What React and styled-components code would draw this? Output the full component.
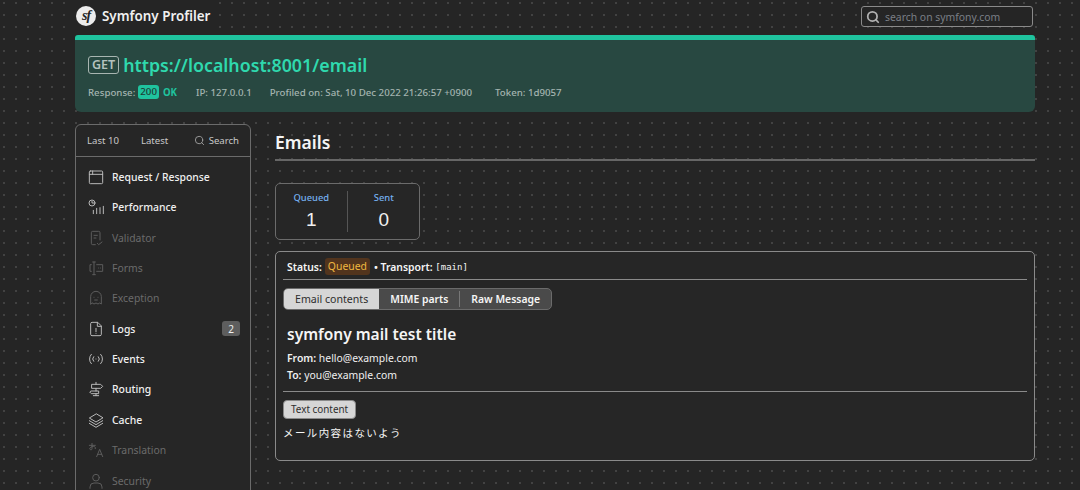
import React from 'react';
import styled, { createGlobalStyle } from 'styled-components';
import { Search as SearchIcon } from 'lucide-react';

const GlobalStyle = createGlobalStyle`
  html, body {
    margin: 0;
    padding: 0;
    height: 490px;
    overflow: hidden;
  }
  body {
    background-color: #252525;
    background-image: radial-gradient(circle at 4px 3px, #424242 1.35px, transparent 1.4px);
    background-size: 12px 12px;
    color: #f5f5f5;
    font-family: "Noto Sans", "Noto Sans CJK JP", sans-serif;
    font-size: 12px;
  }
`;

const Page = styled.div`
  width: 960px;
  height: 490px;
  overflow: hidden;
  margin: 0 0 0 75px;
`;

const Header = styled.header`
  height: 35px;
  display: flex;
  justify-content: space-between;
  align-items: flex-start;
`;

const Brand = styled.div`
  display: flex;
  align-items: center;
  gap: 6px;
  height: 33px;
  background: #252525;
  padding: 0 4px 2px 1px;
  box-sizing: border-box;
`;

const BrandLogo = styled.span`
  width: 20px;
  height: 20px;
  border-radius: 50%;
  background: #ececec;
  color: #252525;
  display: flex;
  align-items: center;
  justify-content: center;
  font: italic 700 14px "Liberation Serif", serif;
  letter-spacing: -1px;
`;

const BrandName = styled.span`
  font-size: 13.4px;
  font-weight: 600;
  color: #f0f0f0;
`;

const SearchBox = styled.div`
  width: 172px;
  height: 21px;
  margin: 6px 2px 0 0;
  box-sizing: border-box;
  border: 1px solid #8a8a8a;
  border-radius: 3px;
  display: flex;
  align-items: center;
  gap: 5px;
  padding-left: 4px;
  background: #252525;
  color: #7a7f85;
  font-size: 10.4px;
  svg {
    color: #b0b0b0;
  }
`;

const Summary = styled.section`
  height: 77px;
  box-sizing: border-box;
  border-top: 5px solid #1fc39e;
  border-radius: 3px 3px 6px 6px;
  background: #284841;
  padding: 12px 13px 0;
`;

const UrlRow = styled.div`
  display: flex;
  align-items: center;
  gap: 4px;
  height: 26px;
`;

const Method = styled.span`
  border: 1px solid #a8b5b1;
  border-radius: 3px;
  color: #b5c2be;
  font-size: 12.5px;
  font-weight: 600;
  line-height: 16px;
  padding: 0 3px;
`;

const Url = styled.span`
  color: #2fd9ae;
  font-size: 17.8px;
  font-weight: 600;
`;

const MetaRow = styled.div`
  display: flex;
  align-items: center;
  margin-top: 6px;
  height: 16px;
  color: #a4b4b0;
  font-size: 9.7px;
  font-weight: 500;
`;

const MetaItem = styled.span`
  margin-right: ${({ $gap }) => $gap}px;
  display: flex;
  align-items: center;
  white-space: pre;
`;

const StatusCode = styled.span`
  background: #1fc39e;
  color: #1e3a33;
  border-radius: 3px;
  padding: 0 2px;
  margin: 0 4px 0 3px;
  line-height: 14px;
`;

const StatusText = styled.span`
  color: #1fc39e;
  font-weight: 700;
`;

const Body = styled.div`
  display: flex;
  align-items: flex-start;
  gap: 24px;
  margin-top: 12px;
`;

const Sidebar = styled.aside`
  width: 176px;
  flex: none;
  height: 400px;
  box-sizing: border-box;
  border: 1px solid #6b6b6b;
  border-radius: 6px;
  background: #262626;
`;

const SideTabs = styled.div`
  height: 32px;
  box-sizing: border-box;
  border-bottom: 1px solid #6b6b6b;
  display: flex;
  align-items: center;
  gap: 22px;
  padding: 0 11px;
  color: #c8c8c8;
  font-size: 9.6px;
  svg {
    color: #a0a0a0;
    margin-right: 4px;
  }
`;

const SideTab = styled.span`
  display: flex;
  align-items: center;
  &:last-child {
    margin-left: auto;
  }
`;

const Menu = styled.nav`
  padding-top: 4.6px;
`;

const MenuItem = styled.div`
  height: 30.38px;
  display: flex;
  align-items: center;
  padding: 0 10px 0 12px;
  font-size: 10.4px;
  color: ${({ $muted }) => ($muted ? '#6b6b6b' : '#f0f0f0')};
  svg {
    flex: none;
    width: 16px;
    height: 16px;
    margin-right: 8px;
    color: ${({ $muted }) => ($muted ? '#5c5c5c' : '#b8b8b8')};
  }
`;

const MenuLabel = styled.span`
  flex: 1;
  font-weight: ${({ $muted }) => ($muted ? 400 : 500)};
`;

const Count = styled.span`
  background: #5e5e5e;
  color: #f0f0f0;
  border-radius: 3px;
  width: 18px;
  height: 15px;
  display: flex;
  align-items: center;
  justify-content: center;
  font-size: 10px;
`;

const Content = styled.main`
  flex: 1;
  min-width: 0;
`;

const Title = styled.h2`
  margin: 0;
  height: 37px;
  box-sizing: border-box;
  border-bottom: 2px solid #666;
  font-size: 17.5px;
  font-weight: 600;
  line-height: 36px;
  color: #f5f5f5;
`;

const Metrics = styled.div`
  width: 145px;
  height: 57px;
  box-sizing: border-box;
  margin-top: 22px;
  border: 1px solid #6b6b6b;
  border-radius: 5px;
  background: #262626;
  display: flex;
  align-items: center;
`;

const Metric = styled.div`
  height: 41px;
  flex: 1;
  text-align: center;
  & + & {
    border-left: 1px solid #555;
    padding-left: 1px;
  }
`;

const MetricLabel = styled.div`
  color: #75b0f0;
  font-size: 9.4px;
  font-weight: 500;
  line-height: 14px;
`;

const MetricValue = styled.div`
  color: #f0f0f0;
  font: 400 19px/30px "Liberation Sans", sans-serif;
`;

const EmailCard = styled.article`
  height: 210px;
  box-sizing: border-box;
  margin-top: 11px;
  border: 1px solid #8a8a8a;
  border-radius: 5px;
  background: #262626;
  padding: 0 7px;
`;

const StatusRow = styled.div`
  height: 28px;
  box-sizing: border-box;
  padding: 2px 0 0 4px;
  display: flex;
  align-items: center;
  border-bottom: 1px solid #8a8a8a;
  font-size: 10.4px;
  font-weight: 600;
  white-space: pre;
`;

const Queued = styled.span`
  background: #52341d;
  color: #f0b840;
  border-radius: 3px;
  padding: 0 3px;
  line-height: 17px;
  margin: 0 4px 0 3px;
  font-weight: 400;
`;

const Mono = styled.code`
  font: 400 9px "DejaVu Sans Mono", monospace;
`;

const Tabs = styled.div`
  display: inline-flex;
  margin-top: 8px;
  height: 22px;
  box-sizing: border-box;
  border: 1px solid #6b6b6b;
  border-radius: 5px;
  background: #4a4a4a;
  overflow: hidden;
`;

const Tab = styled.span`
  display: flex;
  align-items: center;
  padding: 0 11px;
  font-size: ${({ $active }) => ($active ? 10.6 : 10.4)}px;
  font-weight: ${({ $active }) => ($active ? 400 : 600)};
  background: ${({ $active }) => ($active ? '#d6d6d6' : 'transparent')};
  color: ${({ $active }) => ($active ? '#2e2e2e' : '#f5f5f5')};
  & + & + & {
    border-left: 1px solid #777;
    height: 16px;
    align-self: center;
  }
`;

const Headers = styled.div`
  padding: 13px 4px 7px;
  border-bottom: 1px solid #8a8a8a;
`;

const Subject = styled.h3`
  margin: 0 0 5px;
  font-size: 15.5px;
  font-weight: 600;
  line-height: 22px;
`;

const HeaderLine = styled.p`
  margin: 0;
  font-size: 10.4px;
  line-height: 17px;
  color: #f0f0f0;
  b {
    font-weight: 600;
  }
`;

const SmallTab = styled.div`
  display: inline-block;
  margin-top: 8px;
  height: 19px;
  box-sizing: border-box;
  border: 1px solid #8a8a8a;
  border-radius: 4px;
  background: #d6d6d6;
  color: #2e2e2e;
  padding: 0 7px;
  font-size: 9.9px;
  line-height: 17px;
`;

const MailText = styled.p`
  margin: 6px 0 0;
  font-size: 10.5px;
  line-height: 16px;
  letter-spacing: 1.4px;
  color: #f5f5f5;
`;

const Icon = ({ children }) => (
  <svg viewBox="0 0 24 24" fill="none" stroke="currentColor" strokeWidth="1.5" strokeLinecap="round" strokeLinejoin="round">
    {children}
  </svg>
);

const icons = {
  request: (
    <Icon>
      <rect x="2" y="3" width="20" height="19" rx="1.5" />
      <path d="M2 8h20M7 3v5" />
    </Icon>
  ),
  performance: (
    <Icon>
      <circle cx="6" cy="6" r="4.5" />
      <path d="M6 3.500V6h2.500M8 22v-5M13 22v-8M18 22V13M23 22V11" />
    </Icon>
  ),
  validator: (
    <Icon>
      <path d="M11 22H7a2 2 0 0 1-2-2V4a2 2 0 0 1 2-2h9a2 2 0 0 1 2 2v11M9 8h5M9 12h3M14 20l2 2 5-4" />
    </Icon>
  ),
  forms: (
    <Icon>
      <path d="M7 3h4M7 22h4M9 3v19M5 7H3v10h2M13 7h9v10h-9M16 12h.01M19 12h.01" />
    </Icon>
  ),
  exception: (
    <Icon>
      <path d="M4 21V10a8 8 0 0 1 16 0v11l-2.500-1.500L15 21l-3-1.500L9 21l-2.500-1.500zM9 11h.01M15 11h.01M10 15h4" />
    </Icon>
  ),
  logs: (
    <Icon>
      <path d="M14 2H6a2 2 0 0 0-2 2v16a2 2 0 0 0 2 2h12a2 2 0 0 0 2-2V8zM14 2v6h6M12 11v5M12 18.500h.01" />
    </Icon>
  ),
  events: (
    <Icon>
      <path d="M5 5a10 10 0 0 0 0 14M19 5a10 10 0 0 1 0 14M8.500 8.500a5 5 0 0 0 0 7M15.500 8.500a5 5 0 0 1 0 7M12 12h.01" />
    </Icon>
  ),
  routing: (
    <Icon>
      <path d="M12 2v3M12 11v4M12 19v3M8 22h8M6 5h13l3 3-3 3H6zM5 15h11v4H5l-2-2z" />
    </Icon>
  ),
  cache: (
    <Icon>
      <path d="M12 3 2 9l10 6 10-6zM2 13l10 6 10-6M2 17l10 6 10-6" />
    </Icon>
  ),
  translation: (
    <Icon>
      <path d="M2 5h9M6 2v8c0 2-2 2-3 1s0-3 3-4 6 0 5 3M13 22l4.500-11L22 22M14.500 18.500h6" />
    </Icon>
  ),
  security: (
    <Icon>
      <circle cx="12" cy="7" r="5" />
      <path d="M3 23v-2a6 6 0 0 1 6-6h6a6 6 0 0 1 6 6v2" />
    </Icon>
  ),
};

const panels = [
  { name: 'Request / Response', icon: 'request' },
  { name: 'Performance', icon: 'performance' },
  { name: 'Validator', icon: 'validator', muted: true },
  { name: 'Forms', icon: 'forms', muted: true },
  { name: 'Exception', icon: 'exception', muted: true },
  { name: 'Logs', icon: 'logs', count: 2 },
  { name: 'Events', icon: 'events' },
  { name: 'Routing', icon: 'routing' },
  { name: 'Cache', icon: 'cache' },
  { name: 'Translation', icon: 'translation', muted: true },
  { name: 'Security', icon: 'security', muted: true },
];

const App = () => (
  <>
    <GlobalStyle />
    <Page>
      <Header>
        <Brand>
          <BrandLogo>sf</BrandLogo>
          <BrandName>Symfony Profiler</BrandName>
        </Brand>
        <SearchBox>
          <SearchIcon size={14} strokeWidth={3} />
          search on symfony.com
        </SearchBox>
      </Header>
      <Summary>
        <UrlRow>
          <Method>GET</Method>
          <Url>https://localhost:8001/email</Url>
        </UrlRow>
        <MetaRow>
          <MetaItem $gap={19}>
            Response:<StatusCode>200</StatusCode><StatusText>OK</StatusText>
          </MetaItem>
          <MetaItem $gap={18}>IP: 127.0.0.1</MetaItem>
          <MetaItem $gap={23}>Profiled on: Sat, 10 Dec 2022 21:26:57 +0900</MetaItem>
          <MetaItem $gap={0}>Token: 1d9057</MetaItem>
        </MetaRow>
      </Summary>
      <Body>
        <Sidebar>
          <SideTabs>
            <SideTab>Last 10</SideTab>
            <SideTab>Latest</SideTab>
            <SideTab>
              <SearchIcon size={11} />
              Search
            </SideTab>
          </SideTabs>
          <Menu>
            {panels.map((panel) => (
              <MenuItem key={panel.name} $muted={panel.muted}>
                {icons[panel.icon]}
                <MenuLabel $muted={panel.muted}>{panel.name}</MenuLabel>
                {panel.count && <Count>{panel.count}</Count>}
              </MenuItem>
            ))}
          </Menu>
        </Sidebar>
        <Content>
          <Title>Emails</Title>
          <Metrics>
            <Metric>
              <MetricLabel>Queued</MetricLabel>
              <MetricValue>1</MetricValue>
            </Metric>
            <Metric>
              <MetricLabel>Sent</MetricLabel>
              <MetricValue>0</MetricValue>
            </Metric>
          </Metrics>
          <EmailCard>
            <StatusRow>
              Status:<Queued>Queued</Queued>• Transport: <Mono>[main]</Mono>
            </StatusRow>
            <Tabs>
              <Tab $active>Email contents</Tab>
              <Tab>MIME parts</Tab>
              <Tab>Raw Message</Tab>
            </Tabs>
            <Headers>
              <Subject>symfony mail test title</Subject>
              <HeaderLine><b>From:</b> hello@example.com</HeaderLine>
              <HeaderLine><b>To:</b> you@example.com</HeaderLine>
            </Headers>
            <SmallTab>Text content</SmallTab>
            <MailText>メール内容はないよう</MailText>
          </EmailCard>
        </Content>
      </Body>
    </Page>
  </>
);

export default App;
